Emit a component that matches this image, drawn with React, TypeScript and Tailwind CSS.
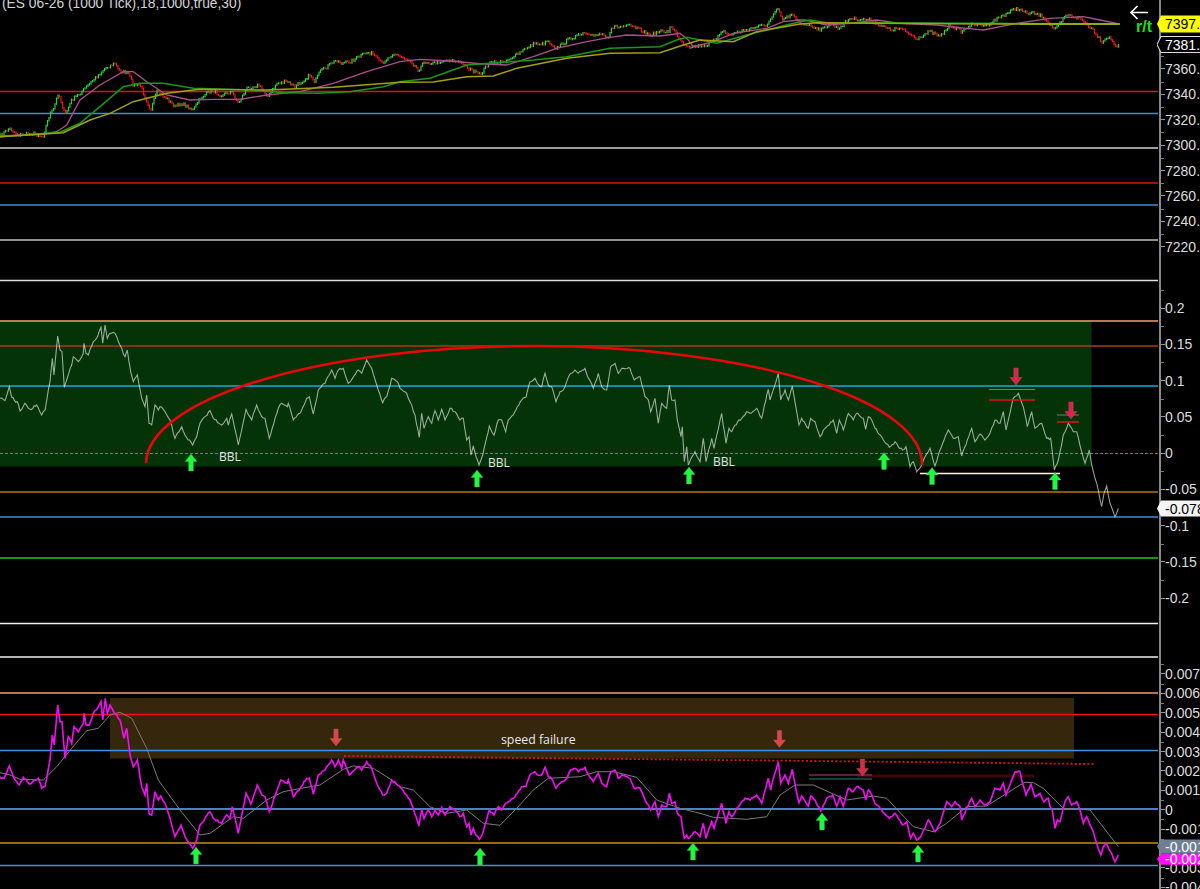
import React from "react";

type Pt = [number, number];

// zoomed tracing: flat zx,zy list, 3x crop with origin ox,oy
const seg = (ox: number, oy: number, flat: number[]): Pt[] => {
  const out: Pt[] = [];
  for (let i = 0; i < flat.length; i += 2) out.push([ox + flat[i] / 3, oy + flat[i + 1] / 3]);
  return out;
};

const join = (...parts: Pt[][]): Pt[] => {
  const out: Pt[] = [];
  parts.flat().forEach((p) => {
    if (!out.length || p[0] > out[out.length - 1][0]) out.push(p);
  });
  return out;
};

const toPath = (pts: Pt[]) =>
  pts.map((p, i) => `${i ? "L" : "M"}${p[0].toFixed(1)} ${p[1].toFixed(1)}`).join("");

let seed = 7;
const rnd = () => {
  seed = (seed * 16807) % 2147483647;
  return seed / 2147483647 - 0.5;
};

const yAt = (pts: Pt[], x: number) => {
  for (let i = 1; i < pts.length; i++) {
    if (x <= pts[i][0]) {
      const t = (x - pts[i - 1][0]) / (pts[i][0] - pts[i - 1][0]);
      return pts[i - 1][1] + (pts[i][1] - pts[i - 1][1]) * t;
    }
  }
  return pts[pts.length - 1][1];
};

// adds tick noise between traced points, the traced extremes stay put
const roughen = (pts: Pt[], amp: number): Pt[] => {
  const out: Pt[] = [pts[0]];
  for (let i = 1; i < pts.length; i++) {
    const [x0, y0] = pts[i - 1];
    const [x1, y1] = pts[i];
    const n = Math.floor((x1 - x0) / 1.3);
    for (let k = 1; k < n; k++) {
      const t = k / n;
      out.push([x0 + (x1 - x0) * t, y0 + (y1 - y0) * t + rnd() * amp]);
    }
    out.push(pts[i]);
  }
  return out;
};

const price = join(
  seg(0, 0, [0,408,28,385,55,405,100,400,128,410,150,340,160,330,175,278,195,345,215,300,240,280,255,265,280,240,315,205,345,190,355,210,385,220,400,255,420,255,452,330,470,275,500,295,525,320,545,310,580,330,600,295,635,270,660,285,695,275,715,310,740,265,775,255,805,290,830,250,860,245,885,260,930,225,945,245,960,215,1010,180,1025,190,1050,185,1100,158,1115,160,1145,190,1180,160,1200,170]),
  seg(400, 0, [0,170,30,180,55,210,75,185,100,190,130,182,150,180,190,190,205,205,240,225,265,190,310,185,350,165,385,140,405,130,430,132,440,120,470,145,510,115,555,100,570,110,600,100,625,110,635,82,690,78,710,85,750,105,780,95,805,95,810,78,825,95,850,130,870,140,920,135,945,120,965,90,985,105,1070,80,1100,75,1135,25,1145,60,1175,45,1200,70]),
  seg(750, 0, [0,85,40,85,85,25,100,55,130,35,150,65,170,72,215,90,240,70,265,85,300,55,360,60,390,75,420,90,450,85,500,115,540,95,570,110,600,75,635,95,660,75,710,75,760,45,800,25,830,40,850,40,880,50,915,90,950,45,990,55,1030,90,1055,125,1075,110,1100,140,1108,130])
);

// candles: a small body every 1.5px, coloured by direction
const candles = (() => {
  let up = "";
  let down = "";
  let prev = price[0][1];
  for (let x = 1; x < price[price.length - 1][0]; x += 1.5) {
    const c = yAt(price, x) + rnd() * 3.4;
    const line = `M${x} ${(Math.min(prev, c) - 0.8).toFixed(1)}V${(Math.max(prev, c) + 0.8).toFixed(1)}`;
    if (c <= prev) up += line;
    else down += line;
    prev = c;
  }
  return { up, down };
})();

const maPink = join(
  seg(0, 0, [0,408,130,402,170,395,200,375,240,300,300,255,370,215,400,215,440,245,500,285,570,300,640,298,720,298,800,285,900,275,1000,250,1100,215,1200,185]),
  seg(400, 0, [0,170,60,178,150,183,250,192,320,195,400,170,470,145,560,125,630,112,680,105,780,108,840,100,865,120,880,140,940,125,1000,100,1100,85,1150,65,1200,60]),
  seg(750, 0, [0,90,100,70,135,50,165,60,230,75,300,70,380,60,450,70,560,75,650,85,700,90,800,70,900,55,1000,50,1050,60,1100,70])
);
const maGreen = join(
  seg(0, 0, [0,410,180,397,240,370,300,320,370,260,420,250,490,250,580,265,680,268,760,270,850,278,950,280,1050,275,1150,260,1200,245]),
  seg(400, 0, [0,245,90,235,200,195,270,190,400,180,500,170,630,145,780,140,830,120,860,112,950,130,1060,100,1200,65]),
  seg(750, 0, [0,85,130,65,180,60,240,70,380,68,1108,72])
);
const maOlive = join(
  seg(0, 0, [0,410,190,398,270,360,330,340,400,305,500,280,600,268,800,270,1000,262,1200,247]),
  seg(400, 0, [0,245,100,246,200,230,280,228,350,205,500,175,630,160,780,158,850,135,900,120,1000,125,1070,95,1200,72]),
  seg(750, 0, [0,100,130,72,200,68,380,70,700,72,1108,72])
);

const osc = roughen(join(
  seg(0, 310, [0,265,15,272,28,230,35,262,55,282,60,303,75,280,90,298,110,285,125,315,135,300,150,215,157,145,162,195,173,78,180,120,186,125,193,232,215,165,220,140,235,155,250,130,252,100,258,130,265,135,280,95,290,85,303,52,308,100,315,45,322,85,330,70,345,70,360,105,375,140,382,120,392,185,400,215,412,195,425,265,435,290,440,255,447,340,455,345,465,285,475,300,480,290,495,305,510,330,525,385,545,350,555,375,578,405,590,380,600,340,630,302,640,325,665,345,680,325,685,345,695,312,715,405,738,298,755,330,770,285,785,320,795,325,808,385,835,295,845,280,862,290,865,280,880,330,900,310,920,265,928,260,940,312,955,240,975,220,995,180,1005,205,1015,180,1030,175,1045,220,1075,180,1085,190,1100,150,1115,175,1130,225,1148,278,1160,260,1175,205,1195,220]),
  seg(400, 340, [0,145,20,160,30,185,45,225,58,292,65,220,72,265,85,230,95,250,105,212,115,240,125,208,135,240,150,205,165,215,180,240,190,235,200,300,207,290,213,345,220,318,228,350,237,375,248,345,268,258,282,285,295,240,305,240,317,275,325,240,340,225,352,200,365,180,378,172,390,125,405,115,412,130,425,140,435,100,445,135,455,140,468,185,480,155,490,150,500,125,512,100,525,90,535,100,555,85,563,110,580,145,595,100,605,140,620,150,632,80,645,70,655,100,665,85,690,85,703,120,720,110,735,170,745,180,752,215,765,175,775,250,785,190,800,205,808,135,815,180,825,180,832,240,843,290,847,260,853,365,860,320,865,375,885,335,900,365]),
  seg(680, 340, [0,255,10,345,16,320,22,375,45,335,60,350,70,295,78,365,95,295,102,325,125,220,138,310,147,265,155,275,165,255,185,235,195,225,200,215,210,220,230,205,245,235,265,148,270,180,283,140,295,100,302,180,315,150,325,180,337,138,350,215,357,255,365,235,385,265,392,235,405,245,420,290,435,265,460,240,470,280,478,240,490,270,505,220,520,240,530,220,550,235,557,268,565,230,575,240,585,265,605,290,628,322,645,305,655,320,668,330,678,320,690,380,700,365,710,395,722,380,735,350,750,325,765,378,780,330]),
  seg(900, 360, [120,268,145,210,160,235,175,230,185,288,215,205,225,245,240,222,255,240,270,220,285,180,300,190,310,155,318,210,340,115,355,100,370,140,382,200,395,155,405,205,425,190,440,235,452,235,463,330,475,300,490,225,505,190,520,215,530,215,545,275,555,310,568,270,575,315,590,370,605,440,612,400,620,378,630,430,645,470,655,445])
), 2.2);

const speed = roughen(join(
  seg(0, 680, [0,290,12,295,28,258,40,290,58,315,70,292,90,312,115,295,125,325,135,320,150,240,157,165,163,195,173,75,180,125,186,125,195,235,205,170,215,190,222,140,235,155,250,130,253,100,258,135,268,135,280,100,295,80,303,65,308,120,316,55,322,100,330,75,345,100,360,120,372,175,380,145,390,225,400,260,412,240,425,320,435,345,440,310,447,400,455,405,465,335,475,360,482,348,495,370,510,415,525,470,543,435,555,470,578,505,590,480,600,435,630,395,640,415,665,430,680,405,690,415,697,380,715,460,738,340,752,372,772,315,785,345,795,350,808,395,835,320,842,300,862,310,865,300,880,350,900,325,920,295,928,295,940,342,955,285,975,270,995,240,1005,260,1015,240,1025,265,1030,240,1048,285,1075,260,1085,270,1100,245,1115,265,1130,310,1148,345,1160,340,1175,300,1198,318]),
  seg(400, 720, [0,200,20,225,30,240,40,265,57,318,65,270,72,295,85,270,95,290,105,270,115,285,125,262,135,285,150,260,165,270,180,290,190,280,200,320,207,310,213,345,220,325,228,345,238,358,248,340,268,270,282,285,295,260,305,270,317,250,325,245,340,235,352,220,365,200,378,200,390,165,405,155,412,165,425,165,435,142,445,170,455,175,468,205,480,190,490,185,500,175,512,150,525,145,535,155,555,142,563,160,580,185,595,160,605,190,620,200,632,155,645,150,655,175,665,165,690,175,703,205,720,205,735,240,745,255,752,270,765,245,775,290,785,255,800,260,808,220,815,250,825,245,832,280,843,290,847,320,853,355,860,345,865,355,885,335,900,350]),
  seg(680, 720, [0,290,10,345,16,325,22,355,45,338,58,350,70,310,78,355,95,305,102,325,125,250,138,310,147,275,155,290,175,260,195,235,210,240,230,225,245,250,265,175,272,210,283,165,295,125,302,190,315,165,325,190,337,148,350,220,357,248,365,228,385,258,392,228,405,240,422,272,440,235,458,225,470,258,480,230,490,258,505,205,520,215,530,200,550,210,557,240,565,210,575,225,585,250,605,270,628,295,645,280,655,295,668,315,680,305,692,355,700,340,710,360,722,350,745,300,757,320,765,335,780,310,800,245,815,260,825,245,840,260,845,300,860,265,875,235,885,260,900,240,915,255,930,245,945,205,960,210,970,190,978,225,995,180,1005,155,1020,155]),
  seg(1000, 680, [55,270,65,300,78,345,93,312,105,350,120,340,132,365,145,355,150,380,157,390,165,445,172,420,180,425,195,365,205,350,215,375,230,365,240,390,250,430,260,410,270,435,280,455,290,490,302,525,310,500,318,490,335,520,345,545,355,525])
), 1.8);

const signal = join(
  seg(0, 680, [0,278,30,285,60,298,130,300,170,260,215,205,260,152,295,145,330,105,360,97,395,115,440,205,475,300,540,390,600,465,630,460,700,410,730,415,800,360,850,335,920,322,960,315,1030,268,1060,258,1120,265,1175,300,1200,320]),
  seg(400, 720, [0,185,40,210,90,260,140,280,200,270,250,310,300,316,350,265,400,210,445,175,540,170,590,155,640,155,710,172,770,240,840,265,900,280]),
  seg(680, 720, [0,265,100,292,200,298,260,290,300,225,345,195,400,195,460,222,500,240,580,228,620,235,700,320,760,335,800,310,860,260,920,258,1020,195]),
  seg(1000, 680, [40,330,75,307,100,308,130,325,190,385,270,390,355,500])
);

const hLines: [number, string, number][] = [
  [91.5, "#e01010", 1.4], [113.5, "#3b8ede", 1.4], [148, "#d0d0d0", 1.4], [183, "#e01010", 1.4],
  [205, "#3b8ede", 1.4], [240, "#c0c0c0", 1.3], [280.5, "#e0e0e0", 1.4],
  [321, "#f4a464", 1.4], [346, "#a83c08", 1.6], [386, "#18a8e0", 1.4], [492, "#b07a00", 1.5],
  [517, "#3b8ede", 1.4], [558, "#18d018", 1.4], [623.5, "#f0f0f0", 1.4], [657, "#f0f0f0", 1.4],
  [693, "#f0a060", 1.5], [714.5, "#f01010", 1.6], [750.5, "#4490e0", 1.4], [809, "#4a80c8", 1.8],
  [843, "#8f6e10", 1.8], [865.5, "#4490e0", 1.4],
];

const Lines = () => (
  <>
    {hLines.map(([y, c, w]) => (
      <line key={y} x1="0" x2="1158" y1={y} y2={y} stroke={c} strokeWidth={w} />
    ))}
  </>
);

const UpArrow = ({ x, y }: { x: number; y: number }) => (
  <path
    d={`M${x} ${y}L${x + 6} ${y + 7.5}H${x + 2.4}V${y + 17}H${x - 2.4}V${y + 7.5}H${x - 6}Z`}
    fill="#19ff3a"
    stroke="#6a8a6a"
    strokeWidth="0.4"
  />
);

const DownArrow = ({ x, y, c }: { x: number; y: number; c: string }) => (
  <path
    d={`M${x - 2.2} ${y}H${x + 2.2}V${y + 9.5}H${x + 6}L${x} ${y + 17}L${x - 6} ${y + 9.5}H${x - 2.2}Z`}
    fill={c}
    stroke="#8a6a6a"
    strokeWidth="0.4"
  />
);

const Tick = ({ label, h }: { label: string; h: string }) => (
  <div className={`relative flex items-center ${h}`}>
    <div className="absolute left-0 top-0 h-px w-[3px] bg-[#777]" />
    <div className="h-px w-1 shrink-0 bg-[#999]" />
    <span className="whitespace-nowrap text-[14px] leading-none text-[#dcdcdc]">{label}</span>
  </div>
);

const Flag = ({ className, text, fill, stroke, textClass }: { className: string; text: string; fill: string; stroke?: string; textClass: string }) => (
  <div className={`absolute left-[-4px] w-[48px] ${className}`}>
    <svg viewBox="0 0 48 16" preserveAspectRatio="none" className="absolute inset-0 h-full w-full">
      <path d="M0 8L4 0.5H48V15.5H4Z" fill={fill} stroke={stroke || "none"} strokeWidth="1" />
    </svg>
    <span className={`relative flex h-full items-center pl-[8px] text-[14px] leading-none ${textClass}`}>{text}</span>
  </div>
);

const priceTicks = ["7360.00", "7340.00", "7320.00", "7300.00", "7280.00", "7260.00", "7240.00", "7220.00"];
const oscTicks = ["0.2", "0.15", "0.1", "0.05", "0", "-0.05", "-0.1", "-0.15", "-0.2"];
const speedTicks = ["0.007", "0.006", "0.005", "0.004", "0.003", "0.002", "0.001", "0", "-0.001", "-0.002", "-0.003", "-0.004"];

export default function App() {
  return (
    <div className="flex h-[889px] w-[1200px] flex-col overflow-hidden bg-black font-['Liberation_Sans',Arial,sans-serif] antialiased">
      {/* Price pane */}
      <div className="relative flex h-[285px] overflow-hidden">
        <div className="relative w-[1159px] shrink-0">
          <svg viewBox="0 0 1159 285" className="block h-[285px] w-[1159px]">
            <Lines />
            <path d={candles.down} stroke="#f01818" strokeWidth="1.2" fill="none" />
            <path d={candles.up} stroke="#26d43c" strokeWidth="1.2" fill="none" />
            <path d={toPath(maPink)} stroke="#a8508c" strokeWidth="1.3" fill="none" />
            <path d={toPath(maGreen)} stroke="#149a14" strokeWidth="1.5" fill="none" />
            <path d={toPath(maOlive)} stroke="#a6a010" strokeWidth="1.4" fill="none" />
            <path d="M1020 24H1120" stroke="#90b810" strokeWidth="1.5" fill="none" />
            <path d="M1148 12.5H1131M1137.5 6L1131 12.5L1137.5 19" stroke="#fff" strokeWidth="1.7" fill="none" />
          </svg>
          <span className="absolute left-[2px] top-[-5px] whitespace-nowrap text-[13.8px] leading-[18px] text-[#d4d4d4]">
            (ES 06-26 (1000 Tick),18,1000,true,30)
          </span>
          <span className="absolute left-[1136px] top-[18px] whitespace-nowrap text-[16px] font-bold leading-[18px] text-[#18e018]">
            r/t
          </span>
        </div>
        <div className="relative flex-1 border-l-2 border-[#8a8a8a] pt-[56.3px]">
          {priceTicks.map((t) => (
            <Tick key={t} label={t} h="h-[25.4px]" />
          ))}
          <Flag className="top-[15px] h-[18px]" text="7397.00" fill="#ffff00" textClass="text-black" />
          <Flag className="top-[36px] h-[17px]" text="7381.00" fill="#000" stroke="#ddd" textClass="text-white" />
        </div>
      </div>

      {/* Oscillator pane */}
      <div className="relative flex h-[377px] overflow-hidden">
        <div className="relative w-[1159px] shrink-0">
          <svg viewBox="0 285 1159 377" className="block h-[377px] w-[1159px]">
            <rect x="0" y="321" width="1091.5" height="145.5" fill="#033306" />
            <Lines />
            <line x1="0" x2="1158" y1="453.5" y2="453.5" stroke="#d04a80" strokeWidth="1.2" strokeDasharray="3 2" />
            <path d={toPath(osc)} stroke="#fff" strokeOpacity="0.6" strokeWidth="1.1" fill="none" />
            <path d="M146 463A388 118 0 0 1 922 465" stroke="#e80808" strokeWidth="2.6" fill="none" />
            <path d="M920 473.5H1060" stroke="#fff6d8" strokeWidth="1.4" />
            <path d="M989 389.5H1035M1057 415H1079" stroke="#7a7a6a" strokeWidth="1" />
            <path d="M989 400H1035M1057 422H1079" stroke="#e81010" strokeWidth="1.4" />
            <UpArrow x={191} y={454} />
            <UpArrow x={477} y={470} />
            <UpArrow x={689} y={467} />
            <UpArrow x={884} y={452.5} />
            <UpArrow x={932} y={467.5} />
            <UpArrow x={1055} y={472.5} />
            <DownArrow x={1016} y={368} c="#e0204c" />
            <DownArrow x={1071} y={402} c="#e0204c" />
          </svg>
          <span className="absolute left-[219px] top-[165px] font-['Open_Sans',sans-serif] text-[12px] leading-[14px] text-[#e4e4e4]">BBL</span>
          <span className="absolute left-[488px] top-[171px] font-['Open_Sans',sans-serif] text-[12px] leading-[14px] text-[#e4e4e4]">BBL</span>
          <span className="absolute left-[713px] top-[170px] font-['Open_Sans',sans-serif] text-[12px] leading-[14px] text-[#e4e4e4]">BBL</span>
        </div>
        <div className="relative flex-1 border-l-2 border-[#8a8a8a] pt-[4.9px]">
          {oscTicks.map((t) => (
            <Tick key={t} label={t} h="h-[36.25px]" />
          ))}
          <Flag className="top-[215px] h-[17px]" text="-0.078" fill="#f4f4f4" textClass="text-black" />
        </div>
      </div>

      {/* Speed pane */}
      <div className="relative flex h-[227px] overflow-hidden">
        <div className="relative w-[1159px] shrink-0">
          <svg viewBox="0 662 1159 227" className="block h-[227px] w-[1159px]">
            <rect x="110" y="698" width="964" height="60.5" fill="#35260c" />
            <Lines />
            <path d="M344 756L1095 764" stroke="#d81818" strokeWidth="1.8" strokeDasharray="2 2.2" fill="none" />
            <path d="M857 776H1034" stroke="#3c0808" strokeWidth="3" />
            <path d="M809 775H872" stroke="#7a2a50" strokeWidth="1.4" />
            <path d="M809 779H872" stroke="#1c8080" strokeWidth="1" />
            <path d={toPath(signal)} stroke="#7c7c7c" strokeWidth="1" fill="none" />
            <path d={toPath(speed)} stroke="#f010f0" strokeWidth="1.6" fill="none" />
            <UpArrow x={196} y={847} />
            <UpArrow x={480} y={848} />
            <UpArrow x={693} y={843} />
            <UpArrow x={822} y={813} />
            <UpArrow x={918} y={845} />
            <DownArrow x={336} y={729} c="#e04444" />
            <DownArrow x={779.5} y={730.5} c="#e04444" />
            <DownArrow x={862.5} y={759} c="#d82848" />
          </svg>
          <span className="absolute left-[501px] top-[70px] whitespace-nowrap font-['Open_Sans',sans-serif] text-[12.3px] leading-[16px] text-[#e8e8e8]">
            speed failure
          </span>
        </div>
        <div className="relative flex-1 border-l-2 border-[#8a8a8a] pt-[2.3px]">
          {speedTicks.map((t) => (
            <Tick key={t} label={t} h="h-[19.4px]" />
          ))}
          <Flag className="top-[191px] h-[12px]" text="-0.002" fill="#ff10ff" textClass="text-white" />
          <Flag className="top-[177px] h-[15px]" text="-0.001" fill="#6e7f94" textClass="text-white" />
        </div>
      </div>
    </div>
  );
}
